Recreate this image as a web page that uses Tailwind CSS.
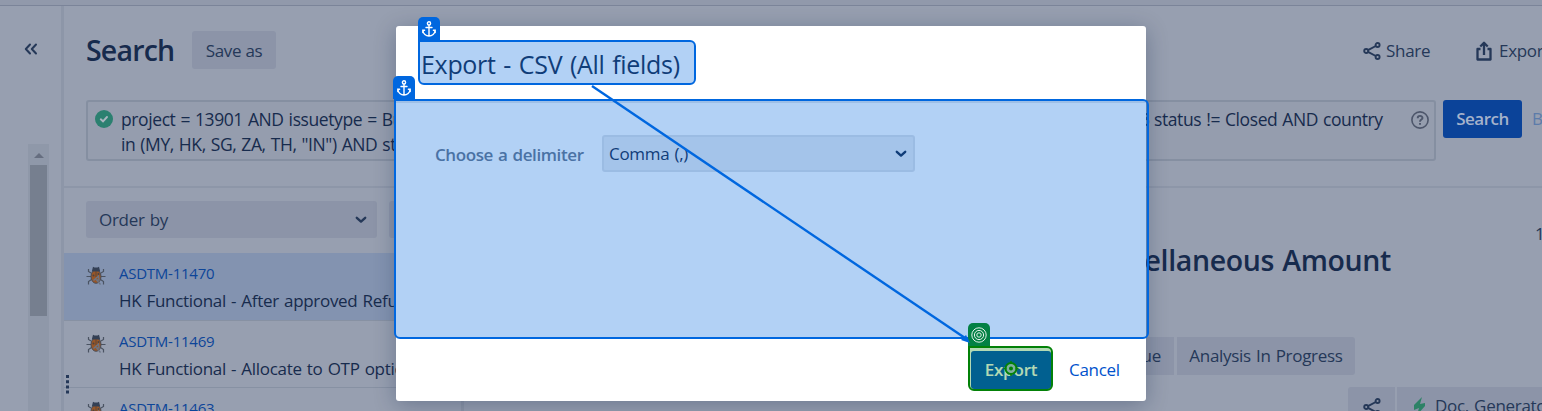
<!DOCTYPE html>
<html lang="en">
<head>
<meta charset="utf-8">
<title>Search</title>
<script src="https://cdn.jsdelivr.net/npm/@tailwindcss/browser@4"></script>
</head>
<body class="relative h-[411px] w-[1542px] overflow-hidden bg-[#979fb0] font-['Open_Sans','Noto_Sans',sans-serif] text-[#172b4d] text-[17px] font-[390] tracking-[-0.3px] [word-spacing:1px] whitespace-nowrap">
<svg class="hidden">
  <symbol id="bug" viewBox="0 0 20 20">
    <g fill="none" stroke="#4a5362" stroke-width="1.2"><path d="M5 7 2.500 5.500V3M15 7l2.500-1.500V3M5 10.500H0.500M15 10.500h4.500M5.500 13.500 2.500 15.500v3M14.500 13.500l3 2v3"/></g>
    <ellipse cx="10" cy="10.500" rx="5" ry="6.800" fill="#985628" stroke="#4a4d56"/>
    <path d="M5.800 5.500 7 .8l1.500.8h3L13 .8l1.200 4.700z" fill="#344055"/>
    <path d="M10 5v6" stroke="#5b4639"/><circle cx="7.500" cy="9.500" r="1" fill="#4c4443"/><circle cx="12.500" cy="8" r="1" fill="#4c4443"/><path d="M7.500 14.500 12.500 10l.5 4h-2.500l4 4.500" fill="none" stroke="#6b7484" stroke-width="1.300"/>
  </symbol>
  <symbol id="share" viewBox="0 0 18 18">
    <g fill="none" stroke="#253858" stroke-width="1.900"><circle cx="3.200" cy="9" r="2"/><circle cx="14.600" cy="3" r="2"/><circle cx="14.600" cy="15" r="2"/><path d="M5 8.100 12.800 4M5 9.900l7.800 4.100"/></g>
  </symbol>
  <symbol id="chev" viewBox="0 0 12 8"><path d="M1.800 1.800 6 5.600l4.200-3.800" fill="none" stroke="currentColor" stroke-width="2.400" stroke-linecap="round" stroke-linejoin="round"/></symbol>
  <symbol id="anchor" viewBox="0 0 14 16">
    <g fill="none" stroke="#fff" stroke-width="1.400" stroke-linecap="round"><circle cx="7" cy="2.400" r="1.600"/><path d="M7 4v11M4 6.500h6M1 9.500c0 3.500 3 5.500 6 5.500s6-2 6-5.500M.8 11.500V9.300h1.800M13.200 11.500V9.300h-1.800"/></g>
  </symbol>
</svg>

<div class="h-[6px] border-b border-[#7b8499] bg-[#9199ab]"></div>
<div class="flex h-[405px]">
  <aside class="flex w-[64px] shrink-0 flex-col border-r-[3px] border-[#8d96a8]">
    <div class="flex h-[138px] justify-center pt-[37px]">
      <svg class="h-[12px] w-[14px]" viewBox="0 0 14 12"><path d="M6 1.500 1.800 6 6 10.500M12 1.500 7.800 6l4.200 4.500" fill="none" stroke="#253858" stroke-width="2" stroke-linecap="round" stroke-linejoin="round"/></svg>
    </div>
    <div class="ml-[28px] flex w-[21px] grow flex-col items-center bg-[#8f98a9] pt-[9px]">
      <svg class="h-[5px] w-[10px]" viewBox="0 0 10 5"><path d="M5 0l5 5H0z" fill="#666e80"/></svg>
      <div class="mt-[7px] h-[151px] w-[17px] bg-[#767f8f]"></div>
    </div>
  </aside>
  <main class="flex w-[1478px] flex-col">
    <header class="flex h-[94px] shrink-0 items-start pt-[25px] pl-[22px] text-[#253858]">
      <h1 class="w-[106px] shrink-0 text-[28.500px] leading-[38px] font-semibold tracking-[-0.8px] text-[#172b4d]">Search</h1>
      <button class="h-[38px] w-[84px] shrink-0 rounded-[3px] bg-[#8c94a8] pt-px">Save as</button>
      <div class="ml-[1087px] flex h-[38px] w-[113px] shrink-0 items-center gap-[5px] pt-px"><svg class="h-[18px] w-[18px]"><use href="#share"/></svg>Share</div>
      <div class="flex h-[38px] shrink-0 items-center gap-[7px] pt-px"><svg class="h-[20px] w-[16px]" viewBox="0 0 16 20"><path d="M4.500 8H1.500v10.500h13V8h-3M8 14V2.500M4.300 5.500 8 1.800l3.700 3.700" fill="none" stroke="#253858" stroke-width="2.300" stroke-linejoin="round"/></svg>Export</div>
    </header>
    <section class="flex h-[88px] shrink-0 border-b-2 border-[#8d96a8] pl-[22px]">
      <div class="flex h-[61px] w-[1350px] shrink-0 items-start rounded-[3px] border-2 border-[#858fa1] bg-[#959dae] pt-[6px] pl-[7px]">
        <svg class="mt-[2px] h-[18px] w-[18px]" viewBox="0 0 18 18"><circle cx="9" cy="9" r="9" fill="#2b8070"/><path d="M5.800 9.300 8 11.300l4-4.300" fill="none" stroke="#aab5c0" stroke-width="1.900" stroke-linecap="round"/></svg>
        <div class="ml-[8px] grow text-[17.500px] leading-[25px] tracking-[-0.4px] [word-spacing:0.8px]">
          <div class="-mt-[1px] flex"><span class="w-[1019px] shrink-0">project = 13901 AND issuetype = Bug</span><span class="w-[14px] shrink-0">3</span><span>status != Closed AND country</span></div>
          <div>in (MY, HK, SG, ZA, TH, "IN") AND status</div>
        </div>
        <svg class="mt-[3px] mr-[5px] h-[18px] w-[18px]" viewBox="0 0 18 18" fill="none" stroke="#4d566b" stroke-width="1.600"><circle cx="9" cy="9" r="8.100"/><path d="M6.700 7.200c0-3 4.800-3 4.800-.2C11.500 8.700 9 8.500 9 10.700M9 12v1.700" stroke-width="1.900"/></svg>
      </div>
      <button class="ml-[7px] h-[38px] w-[79px] shrink-0 rounded-[3px] bg-[#0b4399] font-semibold tracking-[-0.5px] text-[#a5b2cb]">Search</button>
      <span class="mt-[6px] ml-[10px] text-[#5c7baa]">Basic</span>
    </section>
    <div class="flex grow">
      <section class="relative w-[400px] shrink-0 border-r-[3px] border-[#8d96a8]">
        <div class="flex gap-[12px] pt-[13px] pb-[15px] pl-[22px]">
          <div class="flex h-[37px] w-[291px] shrink-0 items-center justify-between rounded-[3px] bg-[#8c94a8] pr-[10px] pl-[13px] text-[#253858]">Order by<svg class="h-[8px] w-[12px]"><use href="#chev"/></svg></div>
          <div class="w-[40px] rounded-[3px] bg-[#8c94a8]"></div>
        </div>
        <div class="flex h-[68px] gap-[13px] border-b border-[#8791a3] bg-[#8393b0] pt-[7px] pl-[22px]">
          <svg class="mt-[6px] h-[20px] w-[20px] shrink-0"><use href="#bug"/></svg>
          <div><div class="h-[27px] text-[15px] leading-[26px] tracking-[-0.25px] text-[#0d4599]">ASDTM-11470</div><div class="leading-[27px]">HK Functional - After approved Refund</div></div>
        </div>
        <div class="flex h-[67px] gap-[13px] border-b border-[#8791a3] pt-[7px] pl-[22px]">
          <svg class="mt-[6px] h-[20px] w-[20px] shrink-0"><use href="#bug"/></svg>
          <div><div class="h-[27px] text-[15px] leading-[26px] tracking-[-0.25px] text-[#0d4599]">ASDTM-11469</div><div class="leading-[27px]">HK Functional - Allocate to OTP option</div></div>
        </div>
        <div class="flex h-[23px] gap-[13px] overflow-hidden pt-[7px] pl-[22px]">
          <svg class="mt-[6px] h-[20px] w-[20px] shrink-0"><use href="#bug"/></svg>
          <div class="text-[15px] leading-[26px] tracking-[-0.25px] text-[#0d4599]">ASDTM-11463</div>
        </div>
        <svg class="absolute top-[187px] left-[2px] h-[19px] w-[3px]" viewBox="0 0 3 19"><path d="M0 0h3v3H0zM0 5.200h3v3H0zM0 10.400h3v3H0zM0 15.600h3v3H0z" fill="#253858"/></svg>
      </section>
      <section class="flex w-[1078px] flex-col text-[#253858]">
        <div class="flex h-[149px] justify-between pt-[33px]">
          <h2 class="w-[927px] pt-[19px] text-right text-[28.500px] leading-[40px] font-semibold tracking-[-0.35px] text-[#172b4d]">Miscellaneous Amount</h2>
          <span class="w-[7px]">1 of 20</span>
        </div>
        <div class="flex h-[38px] gap-[3px] pl-[632px]">
          <div class="w-[78px] bg-[#8c94a8] pr-[13px] text-right leading-[38px]">Issue</div>
          <div class="w-[178px] rounded-r-[3px] bg-[#8c94a8] text-center leading-[38px]">Analysis In Progress</div>
        </div>
        <div class="mt-[12px] flex h-[38px] gap-[2px] pl-[884px]">
          <div class="flex w-[47px] shrink-0 justify-center rounded-l-[3px] bg-[#8c94a8] pt-[11px]"><svg class="h-[18px] w-[18px]"><use href="#share"/></svg></div>
          <div class="flex w-[200px] shrink-0 bg-[#8c94a8] pl-[17px] leading-[38px]"><svg class="mt-[10px] mr-[10px] h-[18px] w-[11px]" viewBox="0 0 11 18"><path d="M8 0 0 8v5l5-2-2 7 8-9V6L6 7z" fill="#2d8266"/></svg>Doc. Generator</div>
        </div>
      </section>
    </div>
  </main>
</div>

<div class="absolute top-[26px] left-[396px] flex h-[375px] w-[750px] flex-col rounded-[3px] bg-white shadow-[0_4px_22px_rgba(9,30,66,0.3)]">
  <h2 class="h-[77px] border-b-2 border-[#e3e5ea] pt-[19px] pl-[25px] text-[25px] leading-[39px] font-normal tracking-[-0.3px] [word-spacing:1.5px]">Export - CSV (All fields)</h2>
  <div class="flex h-[237px] items-start pt-[32px] pl-[39px]">
    <label class="w-[167px] font-semibold leading-[39px] tracking-[-0.4px] text-[#6b778c]">Choose a delimiter</label>
    <div class="flex h-[37px] w-[313px] items-center justify-between rounded-[3px] border-2 border-[#dfe1e6] bg-[#ebecf0] pr-[6px] pl-[5px]">Comma (,)<svg class="h-[8px] w-[12px]"><use href="#chev"/></svg></div>
  </div>
  <div class="flex pt-[11px] pl-[575px]">
    <button class="h-[38px] w-[80px] rounded-[3px] bg-[#0052cc] font-semibold tracking-[-0.2px] text-white">Export</button>
    <button class="ml-[18px] text-[#0052cc]">Cancel</button>
  </div>
</div>

<div class="absolute top-[40px] left-[418px] h-[45px] w-[278px] rounded-r-[6px] rounded-bl-[6px] border-2 border-[#0067df] bg-[#0067df]/30"></div>
<div class="absolute top-[99px] left-[394px] h-[240px] w-[755px] rounded-r-[6px] rounded-bl-[6px] border-2 border-[#0067df] bg-[#0067df]/30"></div>
<div class="absolute top-[17px] left-[418px] flex h-[23px] w-[22px] items-center justify-center rounded-t-[5px] bg-[#0067df]"><svg class="h-[16px] w-[14px]"><use href="#anchor"/></svg></div>
<div class="absolute top-[76px] left-[393px] flex h-[23px] w-[22px] items-center justify-center rounded-t-[5px] bg-[#0067df]"><svg class="h-[16px] w-[14px]"><use href="#anchor"/></svg></div>
<div class="absolute top-[346px] left-[968px] h-[45px] w-[85px] rounded-r-[6px] rounded-bl-[6px] border-2 border-[#038108] bg-[#038108]/30"></div>
<div class="absolute top-[323px] left-[968px] flex h-[23px] w-[22px] items-center justify-center rounded-t-[5px] bg-[#038144]">
  <svg class="h-[16px] w-[16px]" viewBox="0 0 16 16" fill="none" stroke="#e5f2ea" stroke-width="1"><circle cx="8" cy="8" r="7.200"/><circle cx="8" cy="8" r="4.600"/><circle cx="8" cy="8" r="2.200"/></svg>
</div>
<svg class="absolute top-0 left-0 h-[411px] w-[1542px]" fill="none">
  <path d="M592 86 968 340" stroke="#0067df" stroke-width="2.400"/><path d="M970 343l-9-3 5-5z" fill="#0067df"/>
  <circle cx="1011" cy="368.500" r="5.500" fill="#7fae9f" stroke="#038108" stroke-width="2"/><circle cx="1011" cy="368.500" r="2" fill="#038108"/><path d="M1011 361v3M1011 373v3M1003.500 368.500h3M1015.500 368.500h3" stroke="#038108" stroke-width="1.500"/>
</svg>
</body>
</html>
